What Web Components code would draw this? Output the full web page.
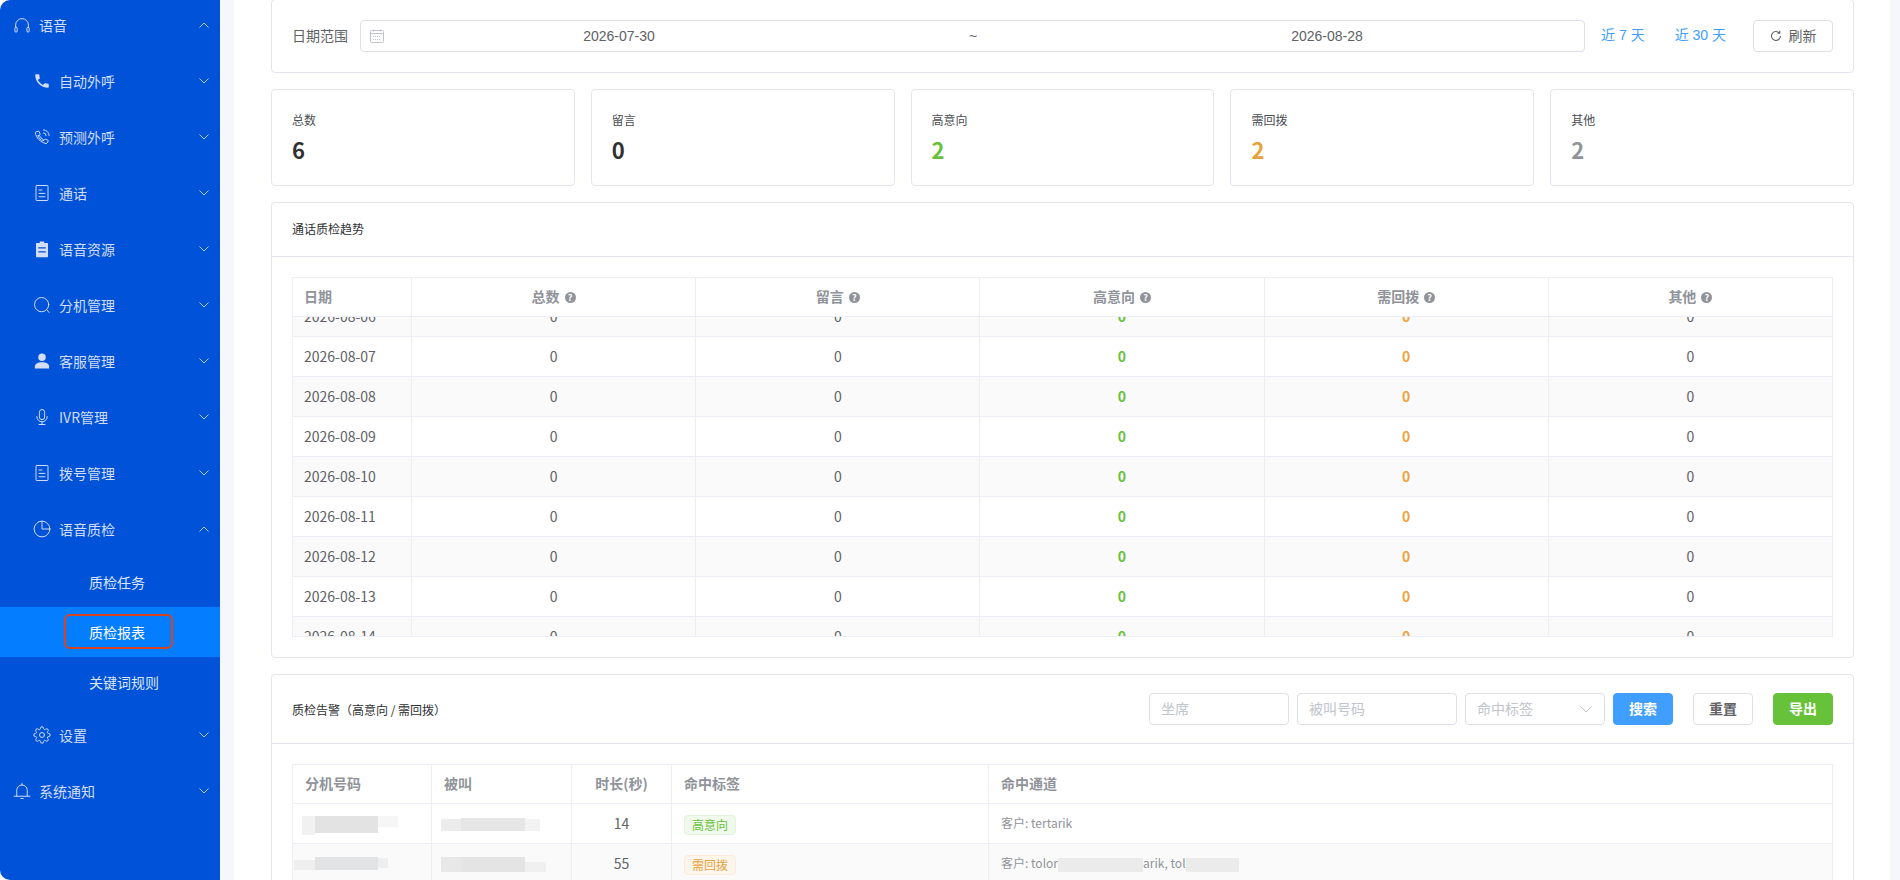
<!DOCTYPE html>
<html lang="zh-CN">
<head>
<meta charset="utf-8">
<title>质检报表</title>
<style>
  html, body { margin: 0; height: 100%; overflow: hidden; background: #fff; }
  body {
    font: 14px/1.4 "Noto Sans CJK SC", "Noto Sans", sans-serif;
    color: #606266;
    display: flex;
    height: 880px;
  }
</style>
</head>
<body>
<app-sidebar>
  <nav-item level="0" icon="headset" open>语音</nav-item>
  <nav-item level="1" icon="phone">自动外呼</nav-item>
  <nav-item level="1" icon="phoneOut">预测外呼</nav-item>
  <nav-item level="1" icon="doc">通话</nav-item>
  <nav-item level="1" icon="clip">语音资源</nav-item>
  <nav-item level="1" icon="search">分机管理</nav-item>
  <nav-item level="1" icon="user">客服管理</nav-item>
  <nav-item level="1" icon="mic">IVR管理</nav-item>
  <nav-item level="1" icon="doc">拨号管理</nav-item>
  <nav-item level="1" icon="pie" open>语音质检</nav-item>
  <nav-item level="2">质检任务</nav-item>
  <nav-item level="2" active marked>质检报表</nav-item>
  <nav-item level="2">关键词规则</nav-item>
  <nav-item level="1" icon="gear">设置</nav-item>
  <nav-item level="0" icon="bell">系统通知</nav-item>
</app-sidebar>

<report-page>
  <date-filter start="2026-07-30" end="2026-08-28"></date-filter>

  <stat-row>
    <stat-card label="总数" value="6"></stat-card>
    <stat-card label="留言" value="0"></stat-card>
    <stat-card label="高意向" value="2" color="#67c23a"></stat-card>
    <stat-card label="需回拨" value="2" color="#e6a23c"></stat-card>
    <stat-card label="其他" value="2" color="#909399"></stat-card>
  </stat-row>

  <panel-card heading="通话质检趋势">
    <trend-table></trend-table>
  </panel-card>

  <panel-card heading="质检告警（高意向 / 需回拨）" tall>
    <alert-filters slot="tools"></alert-filters>
    <alert-table></alert-table>
  </panel-card>
</report-page>

<script>
const ICONS = {
  headset: '<path d="M3.5 15.5V12a8.5 8.5 0 0 1 17 0v3.5"/><rect x="2.5" y="15" width="3" height="6.5" rx="1.5"/><rect x="18.5" y="15" width="3" height="6.5" rx="1.5"/>',
  phone: '<path fill="currentColor" stroke="none" d="M6.6 10.8c1.4 2.8 3.8 5.1 6.6 6.6l2.2-2.2c.3-.3.7-.4 1-.2 1.1.4 2.3.6 3.6.6.6 0 1 .4 1 1V20c0 .6-.4 1-1 1C10.6 21 3 13.4 3 4c0-.6.4-1 1-1h3.5c.6 0 1 .4 1 1 0 1.3.2 2.5.6 3.6.1.3 0 .7-.2 1z"/>',
  phoneOut: '<path d="M6.6 10.8c1.4 2.8 3.8 5.1 6.6 6.6l2.2-2.2c.3-.3.7-.4 1-.2 1.1.4 2 .8 3.2 1.1.6.2.9.7.7 1.2L18.7 20c-.2.6-.7.9-1.2.8C9.8 19 4 13 3.2 6.4c-.1-.6.2-1.1.8-1.2l3.3-.9c.5-.1 1 .2 1.1.7.3 1.2.6 2.1 1 3.2.1.3 0 .7-.2 1z"/><path d="M14 2.5a7.5 7.5 0 0 1 7.5 7.5"/><path d="M14 6.5a3.5 3.5 0 0 1 3.5 3.5"/><path d="M8 10l6 6"/>',
  doc: '<rect x="4" y="2" width="16" height="20" rx="1"/><path d="M8 8h4M8 12.5h8M8 17h8"/>',
  clip: '<path fill="currentColor" stroke="none" fill-rule="evenodd" d="M5 4h4V2h6v2h4a1 1 0 0 1 1 1v17a1 1 0 0 1-1 1H5a1 1 0 0 1-1-1V5a1 1 0 0 1 1-1zM7 9.5v1.800h10V9.500zM7 15v1.800h10V15z"/>',
  search: '<circle cx="11.5" cy="11.5" r="9.5"/><path d="M18.5 18.5l3 3.500"/>',
  user: '<g fill="currentColor" stroke="none"><circle cx="12" cy="7" r="5"/><path d="M2.5 22v-3c0-3.500 4.500-5.500 9.500-5.500s9.500 2 9.500 5.500v3z"/></g>',
  mic: '<rect x="8.5" y="2" width="7" height="13.500" rx="3.500"/><path d="M5 11.500a7 7 0 0 0 14 0M12 18.500V22M8 22h8"/>',
  pie: '<circle cx="12" cy="12" r="10.500"/><path d="M12 1.500V12h10.500"/>',
  gear: '<circle cx="12" cy="12" r="3.300"/><path d="M19.400 15a1.650 1.650 0 0 0 .33 1.820l.06.06a2 2 0 0 1-2.830 2.830l-.06-.06a1.650 1.650 0 0 0-2.820 1.180V21a2 2 0 0 1-4 0v-.09A1.650 1.650 0 0 0 7.180 19.730l-.06.06a2 2 0 0 1-2.830-2.830l.06-.06A1.650 1.650 0 0 0 3.090 14H3a2 2 0 0 1 0-4h.09A1.650 1.650 0 0 0 4.270 7.180l-.06-.06a2 2 0 0 1 2.830-2.830l.06.06A1.650 1.650 0 0 0 10 3.090V3a2 2 0 0 1 4 0v.09a1.650 1.650 0 0 0 2.820 1.180l.06-.06a2 2 0 0 1 2.830 2.830l-.06.06A1.650 1.650 0 0 0 20.910 10H21a2 2 0 0 1 0 4h-.09A1.650 1.650 0 0 0 19.400 15z"/>',
  bell: '<path d="M5 18.500V11a7 7 0 0 1 14 0v7.500"/><path d="M1.500 19h21M12 2v2M10.500 22h3"/>'
};

class AppSidebar extends HTMLElement {
  constructor() {
    super();
    this.attachShadow({ mode: "open" });
    this.shadowRoot.innerHTML = `
      <style>
        :host {
          display: block;
          flex: 0 0 220px;
          height: 880px;
          background: #0052d9;
          border-radius: 10px 0 0 10px;
          overflow: hidden;
        }
        nav { display: block; margin-top: -3px; }
      </style>
      <nav><slot></slot></nav>`;
  }
}

class NavItem extends HTMLElement {
  constructor() {
    super();
    this.attachShadow({ mode: "open" });
  }
  connectedCallback() {
    const level = this.getAttribute("level") || "0";
    const icon = this.getAttribute("icon");
    const hasArrow = level !== "2";
    const open = this.hasAttribute("open");
    this.shadowRoot.innerHTML = `
      <style>
        :host {
          display: flex;
          align-items: center;
          position: relative;
          height: 56px;
          color: #d3def6;
          font-size: 14px;
        }
        :host([level="0"]) { padding-left: 13px; }
        :host([level="1"]) { padding-left: 33px; }
        :host([level="2"]) { padding-left: 89px; height: 50px; color: #dde6f9; }
        :host([active]) { background: #057dff; color: #fff; }
        .ico { width: 18px; height: 18px; flex: none; margin-right: 8px; }
        .ico svg { display: block; width: 18px; height: 18px; fill: none; stroke: currentColor; stroke-width: 1.3; }
        .txt { padding-top: 2px; }
        .arrow { position: absolute; left: 199px; top: 50%; margin-top: -3px; width: 10px; height: 6px; fill: none; stroke: #b9c9ef; stroke-width: 1; }
        .arrow.open { transform: rotate(180deg); }
        .mark { position: absolute; left: 64px; top: 7px; width: 109px; height: 35px; box-sizing: border-box; border: 2px solid #d9431f; border-radius: 6px; }
      </style>
      ${icon ? `<span class="ico"><svg viewBox="0 0 24 24" stroke-linecap="round" stroke-linejoin="round">${ICONS[icon]}</svg></span>` : ""}
      <span class="txt"><slot></slot></span>
      ${hasArrow ? `<svg class="arrow ${open ? "open" : ""}" viewBox="0 0 10 6"><path d="M.5.5 5 5 9.5.5"/></svg>` : ""}
      ${this.hasAttribute("marked") ? `<span class="mark"></span>` : ""}`;
  }
}

class ReportPage extends HTMLElement {
  constructor() {
    super();
    this.attachShadow({ mode: "open" });
    this.shadowRoot.innerHTML = `
      <style>
        :host {
          display: block;
          flex: 1;
          min-width: 0;
          height: 880px;
          overflow: hidden;
          background: #f5f7fb;
          padding: 0 10px 0 14px;
        }
        .sheet {
          background: #fff;
          padding: 0 36px 0 37px;
          margin-top: -1px;
          display: flex;
          flex-direction: column;
          gap: 16px;
        }
      </style>
      <div class="sheet"><slot></slot></div>`;
  }
}

class DateFilter extends HTMLElement {
  constructor() {
    super();
    this.attachShadow({ mode: "open" });
  }
  connectedCallback() {
    this.shadowRoot.innerHTML = `
      <style>
        :host {
          display: flex;
          align-items: center;
          box-sizing: border-box;
          height: 74px;
          padding: 0 20px;
          border: 1px solid #e4e6ef;
          border-radius: 4px;
          background: #fff;
        }
        .label { width: 55px; margin-right: 13px; font-size: 14px; color: #606266; white-space: nowrap; }
        .picker {
          flex: 1;
          display: flex;
          align-items: center;
          box-sizing: border-box;
          height: 32px;
          padding-left: 9px;
          border: 1px solid #dcdfe6;
          border-radius: 4px;
          font-family: "Liberation Sans", "Noto Sans CJK SC", sans-serif;
        }
        .picker svg { width: 14px; height: 14px; flex: none; margin-right: 58px; fill: none; stroke: #c0c4cc; stroke-width: 1; }
        .dates { display: grid; grid-template-columns: repeat(3, 354px); padding-top: 2px; text-align: center; font-size: 14px; color: #606266; }
        .link { margin-left: 16px; color: #409eff; font-family: "Liberation Sans", "Noto Sans CJK SC", sans-serif; white-space: nowrap; }
        .link + .link { margin-left: 30px; }
        button {
          all: unset;
          display: inline-flex;
          align-items: center;
          justify-content: center;
          box-sizing: border-box;
          width: 80px;
          height: 32px;
          margin-left: 27px;
          border: 1px solid #dcdfe6;
          border-radius: 4px;
          color: #606266;
          font-size: 14px;
        }
        button svg { width: 12px; height: 12px; margin-right: 7px; fill: none; stroke: #606266; stroke-width: 1.1; }
      </style>
      <span class="label">日期范围</span>
      <div class="picker">
        <svg viewBox="0 0 14 14"><path d="M1.5 1.5h11a1 1 0 0 1 1 1v10a1 1 0 0 1-1 1h-11a1 1 0 0 1-1-1v-10a1 1 0 0 1 1-1zM.5 4.5h13"/><path d="M3.5.5v2M10.500.5v2"/><path d="M3 7.500h8M3 10.500h8" stroke-dasharray="1 1"/></svg>
        <div class="dates">
          <span>${this.getAttribute("start")}</span>
          <span>~</span>
          <span>${this.getAttribute("end")}</span>
        </div>
      </div>
      <span class="link">近 7 天</span>
      <span class="link">近 30 天</span>
      <button><svg viewBox="0 0 12 12"><path d="M10.5 6a4.500 4.500 0 1 1-1.300-3.200M9.800.8v2.300H7.500"/></svg>刷新</button>`;
  }
}

class StatRow extends HTMLElement {
  constructor() {
    super();
    this.attachShadow({ mode: "open" });
    this.shadowRoot.innerHTML = `
      <style>:host { display: grid; grid-template-columns: repeat(5, 1fr); gap: 16px; }</style>
      <slot></slot>`;
  }
}

class StatCard extends HTMLElement {
  constructor() {
    super();
    this.attachShadow({ mode: "open" });
  }
  connectedCallback() {
    const color = this.getAttribute("color") || "#303133";
    this.shadowRoot.innerHTML = `
      <style>
        :host {
          display: block;
          box-sizing: border-box;
          height: 97px;
          padding: 20px 20px 0;
          border: 1px solid #e4e6ef;
          border-radius: 4px;
          background: #fff;
        }
        .label { font-size: 12px; line-height: 20px; color: #4b4e54; }
        .value { margin-top: 3px; font-size: 22px; font-weight: 700; line-height: 32px; color: ${color}; }
      </style>
      <div class="label">${this.getAttribute("label")}</div>
      <div class="value">${this.getAttribute("value")}</div>`;
  }
}

class PanelCard extends HTMLElement {
  constructor() {
    super();
    this.attachShadow({ mode: "open" });
  }
  connectedCallback() {
    this.shadowRoot.innerHTML = `
      <style>
        :host {
          display: block;
          border: 1px solid #e4e6ef;
          border-radius: 4px;
          background: #fff;
        }
        header {
          display: flex;
          align-items: center;
          justify-content: space-between;
          box-sizing: border-box;
          height: 54px;
          padding: 0 20px;
          border-bottom: 1px solid #e4e6ef;
          font-size: 12px;
          color: #303133;
        }
        :host([tall]) header { height: 69px; }
        :host([tall]) .title { padding-top: 2px; }
        .body { padding: 20px; }
      </style>
      <header><span class="title">${this.getAttribute("heading")}</span><slot name="tools"></slot></header>
      <div class="body"><slot></slot></div>`;
  }
}

const TABLE_CSS = `
  :host { display: block; }
  table { border-collapse: separate; border-spacing: 0; table-layout: fixed; width: 100%; }
  th, td {
    box-sizing: border-box;
    height: 40px;
    padding: 0 12px;
    border-right: 1px solid #ebeef5;
    border-bottom: 1px solid #ebeef5;
    font-size: 14px;
    white-space: nowrap;
  }
  th { height: 39px; color: #909399; font-weight: 700; text-align: left; background: #fff; }
  td { color: #606266; }
  tr.alt td { background: #fafafa; }
  .c { text-align: center; }
  .frame { border-left: 1px solid #ebeef5; border-top: 1px solid #ebeef5; }
`;

class TrendTable extends HTMLElement {
  constructor() {
    super();
    this.attachShadow({ mode: "open" });
  }
  connectedCallback() {
    const heads = ["总数", "留言", "高意向", "需回拨", "其他"];
    const colors = ["", "", "g", "o", ""];
    const colgroup = `<colgroup><col style="width:119px"><col><col><col><col><col></colgroup>`;
    let rows = "";
    for (let d = 6; d <= 14; d++) {
      const day = String(d).padStart(2, "0");
      rows += `<tr class="${d % 2 === 0 ? "alt" : ""}"><td class="first">2026-08-${day}</td>${colors
        .map((k) => `<td class="c ${k}">0</td>`)
        .join("")}</tr>`;
    }
    this.shadowRoot.innerHTML = `
      <style>
        ${TABLE_CSS}
        .scroll { height: 319px; overflow: hidden; }
        .frame { border-bottom: 1px solid #ebeef5; }
        .first { padding-left: 11px; }
        .g, .o { font-weight: 700; }
        .g { color: #67c23a; }
        .o { color: #f0a33c; }
        .help {
          display: inline-block;
          width: 11px;
          height: 11px;
          margin-left: 5px;
          border-radius: 50%;
          background: #909399;
          color: #fff;
          font-size: 9px;
          line-height: 11px;
          text-align: center;
          vertical-align: 1px;
        }
      </style>
      <div class="frame">
        <table>${colgroup}<tr><th class="first">日期</th>${heads
          .map((h) => `<th class="c">${h}<span class="help">?</span></th>`)
          .join("")}</tr></table>
        <div class="scroll"><table>${colgroup}${rows}</table></div>
      </div>`;
    this.shadowRoot.querySelector(".scroll").scrollTop = 20; // list is scrolled a little in the reference
  }
}

// Blurred-out value: a run of grey blocks "width,height,top,colour;..."
class SmudgeMark extends HTMLElement {
  constructor() {
    super();
    this.attachShadow({ mode: "open" });
  }
  connectedCallback() {
    const parts = this.getAttribute("parts").split(";").map((s) => s.split(","));
    this.shadowRoot.innerHTML = `
      <style>
        :host { display: inline-flex; vertical-align: middle; height: 24px; filter: blur(.6px); }
        i { display: block; }
      </style>
      ${parts
        .map(([w, h, t, c]) => `<i style="width:${w}px;height:${h}px;margin-top:${t}px;background:${c}"></i>`)
        .join("")}`;
  }
}

class AlertTable extends HTMLElement {
  constructor() {
    super();
    this.attachShadow({ mode: "open" });
    this.shadowRoot.innerHTML = `
      <style>
        ${TABLE_CSS}
        .tag {
          display: inline-block;
          box-sizing: border-box;
          height: 20px;
          padding: 0 7px;
          border: 1px solid;
          border-radius: 4px;
          font-size: 12px;
          line-height: 18px;
          vertical-align: -2px;
        }
        .green { background: #f0f9eb; border-color: #e1f3d8; color: #67c23a; }
        .orange { background: #fdf6ec; border-color: #faecd8; color: #e6a23c; }
        .small { font-size: 12px; color: #909399; }
        .hide { display: inline-block; height: 14px; background: #ebebeb; vertical-align: middle; }
      </style>
      <div class="frame">
        <table>
          <colgroup><col style="width:139px"><col style="width:140px"><col style="width:100px"><col style="width:317px"><col></colgroup>
          <tr><th>分机号码</th><th>被叫</th><th class="c">时长(秒)</th><th>命中标签</th><th>命中通道</th></tr>
          <tr>
            <td style="padding-left:9px"><smudge-mark parts="13,19,4,#f1f1f1;63,17,4,#e3e3e3;20,11,4,#f6f6f6"></smudge-mark></td>
            <td style="padding-left:9px"><smudge-mark parts="20,12,7,#ececec;64,13,6,#e6e6e6;15,12,7,#f3f3f3"></smudge-mark></td>
            <td class="c">14</td>
            <td><span class="tag green">高意向</span></td>
            <td class="small">客户: tertarik</td>
          </tr>
          <tr class="alt">
            <td style="padding-left:1px"><smudge-mark parts="21,10,8,#efefef;63,13,5,#e2e3e4;10,10,6,#eeeeee"></smudge-mark></td>
            <td style="padding-left:9px"><smudge-mark parts="20,15,5,#e8e8e8;64,15,5,#e4e4e4;21,10,10,#f0f0f0"></smudge-mark></td>
            <td class="c">55</td>
            <td><span class="tag orange">需回拨</span></td>
            <td class="small">客户: tolor<span class="hide" style="width:85px"></span>arik, tol<span class="hide" style="width:53px"></span></td>
          </tr>
        </table>
      </div>`;
  }
}

class AlertFilters extends HTMLElement {
  constructor() {
    super();
    this.attachShadow({ mode: "open" });
    this.shadowRoot.innerHTML = `
      <style>
        :host { display: flex; align-items: center; }
        .field {
          display: flex;
          align-items: center;
          justify-content: space-between;
          box-sizing: border-box;
          height: 32px;
          padding: 0 12px 0 11px;
          margin-right: 8px;
          border: 1px solid #dcdfe6;
          border-radius: 4px;
          color: #c0c4cc;
          font-size: 14px;
        }
        .field svg { width: 12px; height: 7px; fill: none; stroke: #c0c4cc; stroke-width: 1; }
        .btn {
          display: flex;
          align-items: center;
          justify-content: center;
          box-sizing: border-box;
          width: 60px;
          height: 32px;
          border: 1px solid #dcdfe6;
          border-radius: 4px;
          font-size: 14px;
          font-weight: 700;
          color: #606266;
        }
        .btn + .btn { margin-left: 20px; }
        .blue { background: #409eff; border-color: #409eff; color: #fff; }
        .green { background: #67c23a; border-color: #67c23a; color: #fff; }
      </style>
      <div class="field" style="width:140px">坐席</div>
      <div class="field" style="width:160px">被叫号码</div>
      <div class="field" style="width:140px">命中标签<svg viewBox="0 0 12 7"><path d="M.5.5 6 6 11.5.5"/></svg></div>
      <div class="btn blue">搜索</div>
      <div class="btn">重置</div>
      <div class="btn green">导出</div>`;
  }
}

customElements.define("smudge-mark", SmudgeMark);
customElements.define("app-sidebar", AppSidebar);
customElements.define("nav-item", NavItem);
customElements.define("report-page", ReportPage);
customElements.define("date-filter", DateFilter);
customElements.define("stat-row", StatRow);
customElements.define("stat-card", StatCard);
customElements.define("panel-card", PanelCard);
customElements.define("trend-table", TrendTable);
customElements.define("alert-table", AlertTable);
customElements.define("alert-filters", AlertFilters);
</script>
</body>
</html>
